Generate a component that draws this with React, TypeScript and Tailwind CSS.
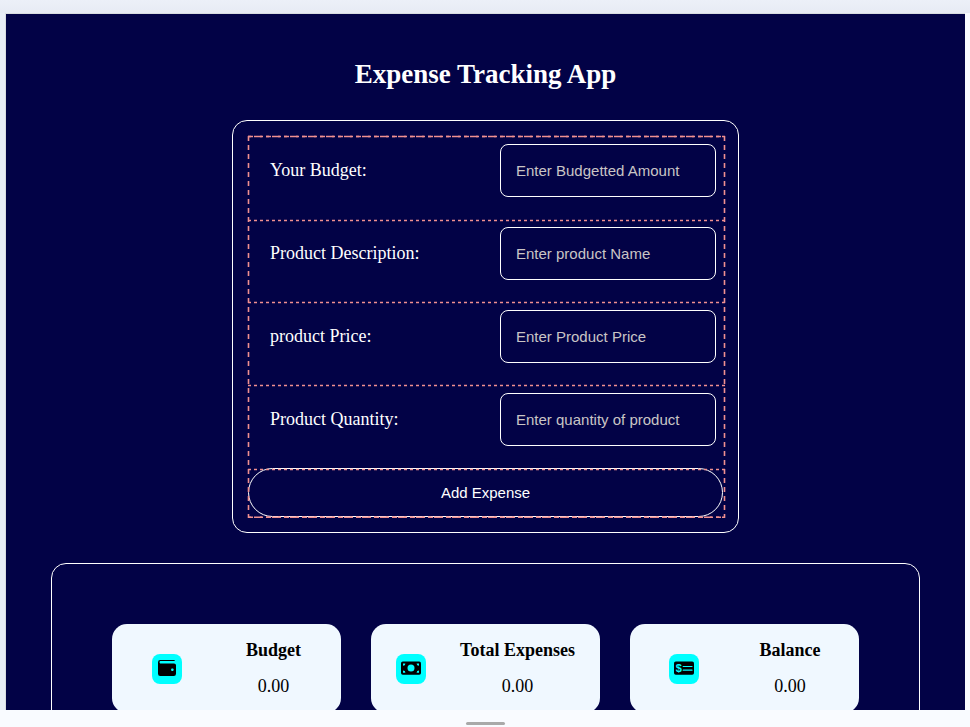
const fields = [
  { label: 'Your Budget:', hint: 'Enter Budgetted Amount' },
  { label: 'Product Description:', hint: 'Enter product Name' },
  { label: 'product Price:', hint: 'Enter Product Price' },
  { label: 'Product Quantity:', hint: 'Enter quantity of product' },
];

function WalletIcon() {
  return (
    <svg width="18" height="16" viewBox="0 0 18 16">
      <path d="M2.2 0H15.6Q17 0 17 1H2.2Q1.6 1.1 1.6 2.3T2.2 3.4H16Q18 3.4 18 5.2V13.8Q18 16 15.8 16H2.2Q0 16 0 13.8V2.2Q0 0 2.2 0Z" />
      <path d="M1.9 2.5H17" stroke="#00ffff" strokeWidth="1" />
      <rect x="13.2" y="8.6" width="2.3" height="2.3" rx="0.7" fill="#00ffff" />
    </svg>
  );
}

function BillIcon() {
  return (
    <svg width="20" height="14" viewBox="0 0 20 14">
      <rect y="0.4" width="20" height="13.4" rx="1.8" />
      <g fill="#00ffff">
        <circle cx="10" cy="7" r="3.5" />
        <path d="M2 2.4H4.4Q4.4 4.8 2 4.8ZM18 2.4H15.6Q15.6 4.8 18 4.8ZM2 11.8H4.4Q4.4 9.4 2 9.4ZM18 11.8H15.6Q15.6 9.4 18 9.4Z" />
      </g>
    </svg>
  );
}

function CheckIcon() {
  return (
    <svg width="20" height="14" viewBox="0 0 20 14">
      <rect y="0.4" width="20" height="13.4" rx="1.8" />
      <text x="1.8" y="10.8" fill="#00ffff" className="font-['Liberation_Sans',sans-serif] text-[11px] font-bold">
        $
      </text>
      <path d="M9.2 5.5H18M9.2 9.2H18" stroke="#00ffff" strokeWidth="1.2" strokeLinecap="round" />
    </svg>
  );
}

const totals = [
  { title: 'Budget', Icon: WalletIcon },
  { title: 'Total Expenses', Icon: BillIcon },
  { title: 'Balance', Icon: CheckIcon },
];

// Dashed guides that show the rows of the form grid.
function GridGuides() {
  return (
    <svg className="pointer-events-none absolute -top-px -left-px" width="480" height="385" fill="none" stroke="#f09090" strokeWidth="1.6">
      <g strokeDasharray="5 4">
        <path d="M1 1.5H478" />
        <path d="M1 382.3H478" />
        <path d="M1.5 1V383" />
        <path d="M477.5 1V383" />
      </g>
      <g strokeDasharray="3 3">
        <path d="M1 1.5H478" />
        <path d="M1 85.5H478" />
        <path d="M1 167.5H478" />
        <path d="M1 250.5H478" />
        <path d="M1 334.5H478" />
        <path d="M1 382.3H478" />
      </g>
    </svg>
  );
}

export default function App() {
  return (
    <div className="flex h-[727px] w-[970px] flex-col overflow-hidden bg-[#f9fbff] font-['Liberation_Serif',serif]">
      <div className="h-[13px] shrink-0 bg-linear-to-b from-[#ecf0f8] to-[#e7ebf4]" />
      <div className="flex h-[697px] shrink-0">
        <div className="w-[6px] shrink-0 border-r border-[#d9dde0] bg-[#e9eef7]" />
        <main className="flex w-[959px] flex-col items-center overflow-hidden border-t border-[#d9dde0] bg-[#020246] text-white">
          <h1 className="mt-[45px] text-[27px] leading-[31px] font-bold whitespace-nowrap">Expense Tracking App</h1>
          <form className="mt-[30px] h-[413px] w-[507px] shrink-0 rounded-[15px] border border-white p-[15px]">
            <div className="relative flex flex-col">
              {fields.map((f) => (
                <div key={f.label} className="flex h-[83px] justify-between pt-2 pr-[7px] pl-[22px]">
                  <label className="h-[53px] text-[18px] leading-[52px]">{f.label}</label>
                  <input
                    placeholder={f.hint}
                    className="h-[53px] w-[216px] rounded-lg border border-white bg-transparent px-[15px] font-['Liberation_Sans',sans-serif] text-[15px] placeholder:text-[#c9c5c5]"
                  />
                </div>
              ))}
              <button type="button" className="h-[49px] w-[475px] rounded-[25px] border border-white pt-px font-['Liberation_Sans',sans-serif] text-[15px]">
                Add Expense
              </button>
              <GridGuides />
            </div>
          </form>
          <section className="mt-[30px] flex h-[240px] w-[869px] shrink-0 gap-[30px] rounded-[15px] border border-white px-[60px] pt-[60px]">
            {totals.map(({ title, Icon }) => (
              <div key={title} className="flex h-[89px] w-[229px] items-center justify-around rounded-[15px] bg-[#f0f8ff] px-2 text-black">
                <div className="flex size-[30px] items-center justify-center rounded-lg bg-[#00ffff] pb-0.5">
                  <Icon />
                </div>
                <div className="flex flex-col gap-4 pb-px text-center text-[18px] leading-5">
                  <h2 className="font-bold">{title}</h2>
                  <p>0.00</p>
                </div>
              </div>
            ))}
          </section>
        </main>
      </div>
      <div className="flex justify-center pt-3">
        <div className="h-[3px] w-[39px] rounded-full bg-[#a9a9a9]" />
      </div>
    </div>
  );
}
